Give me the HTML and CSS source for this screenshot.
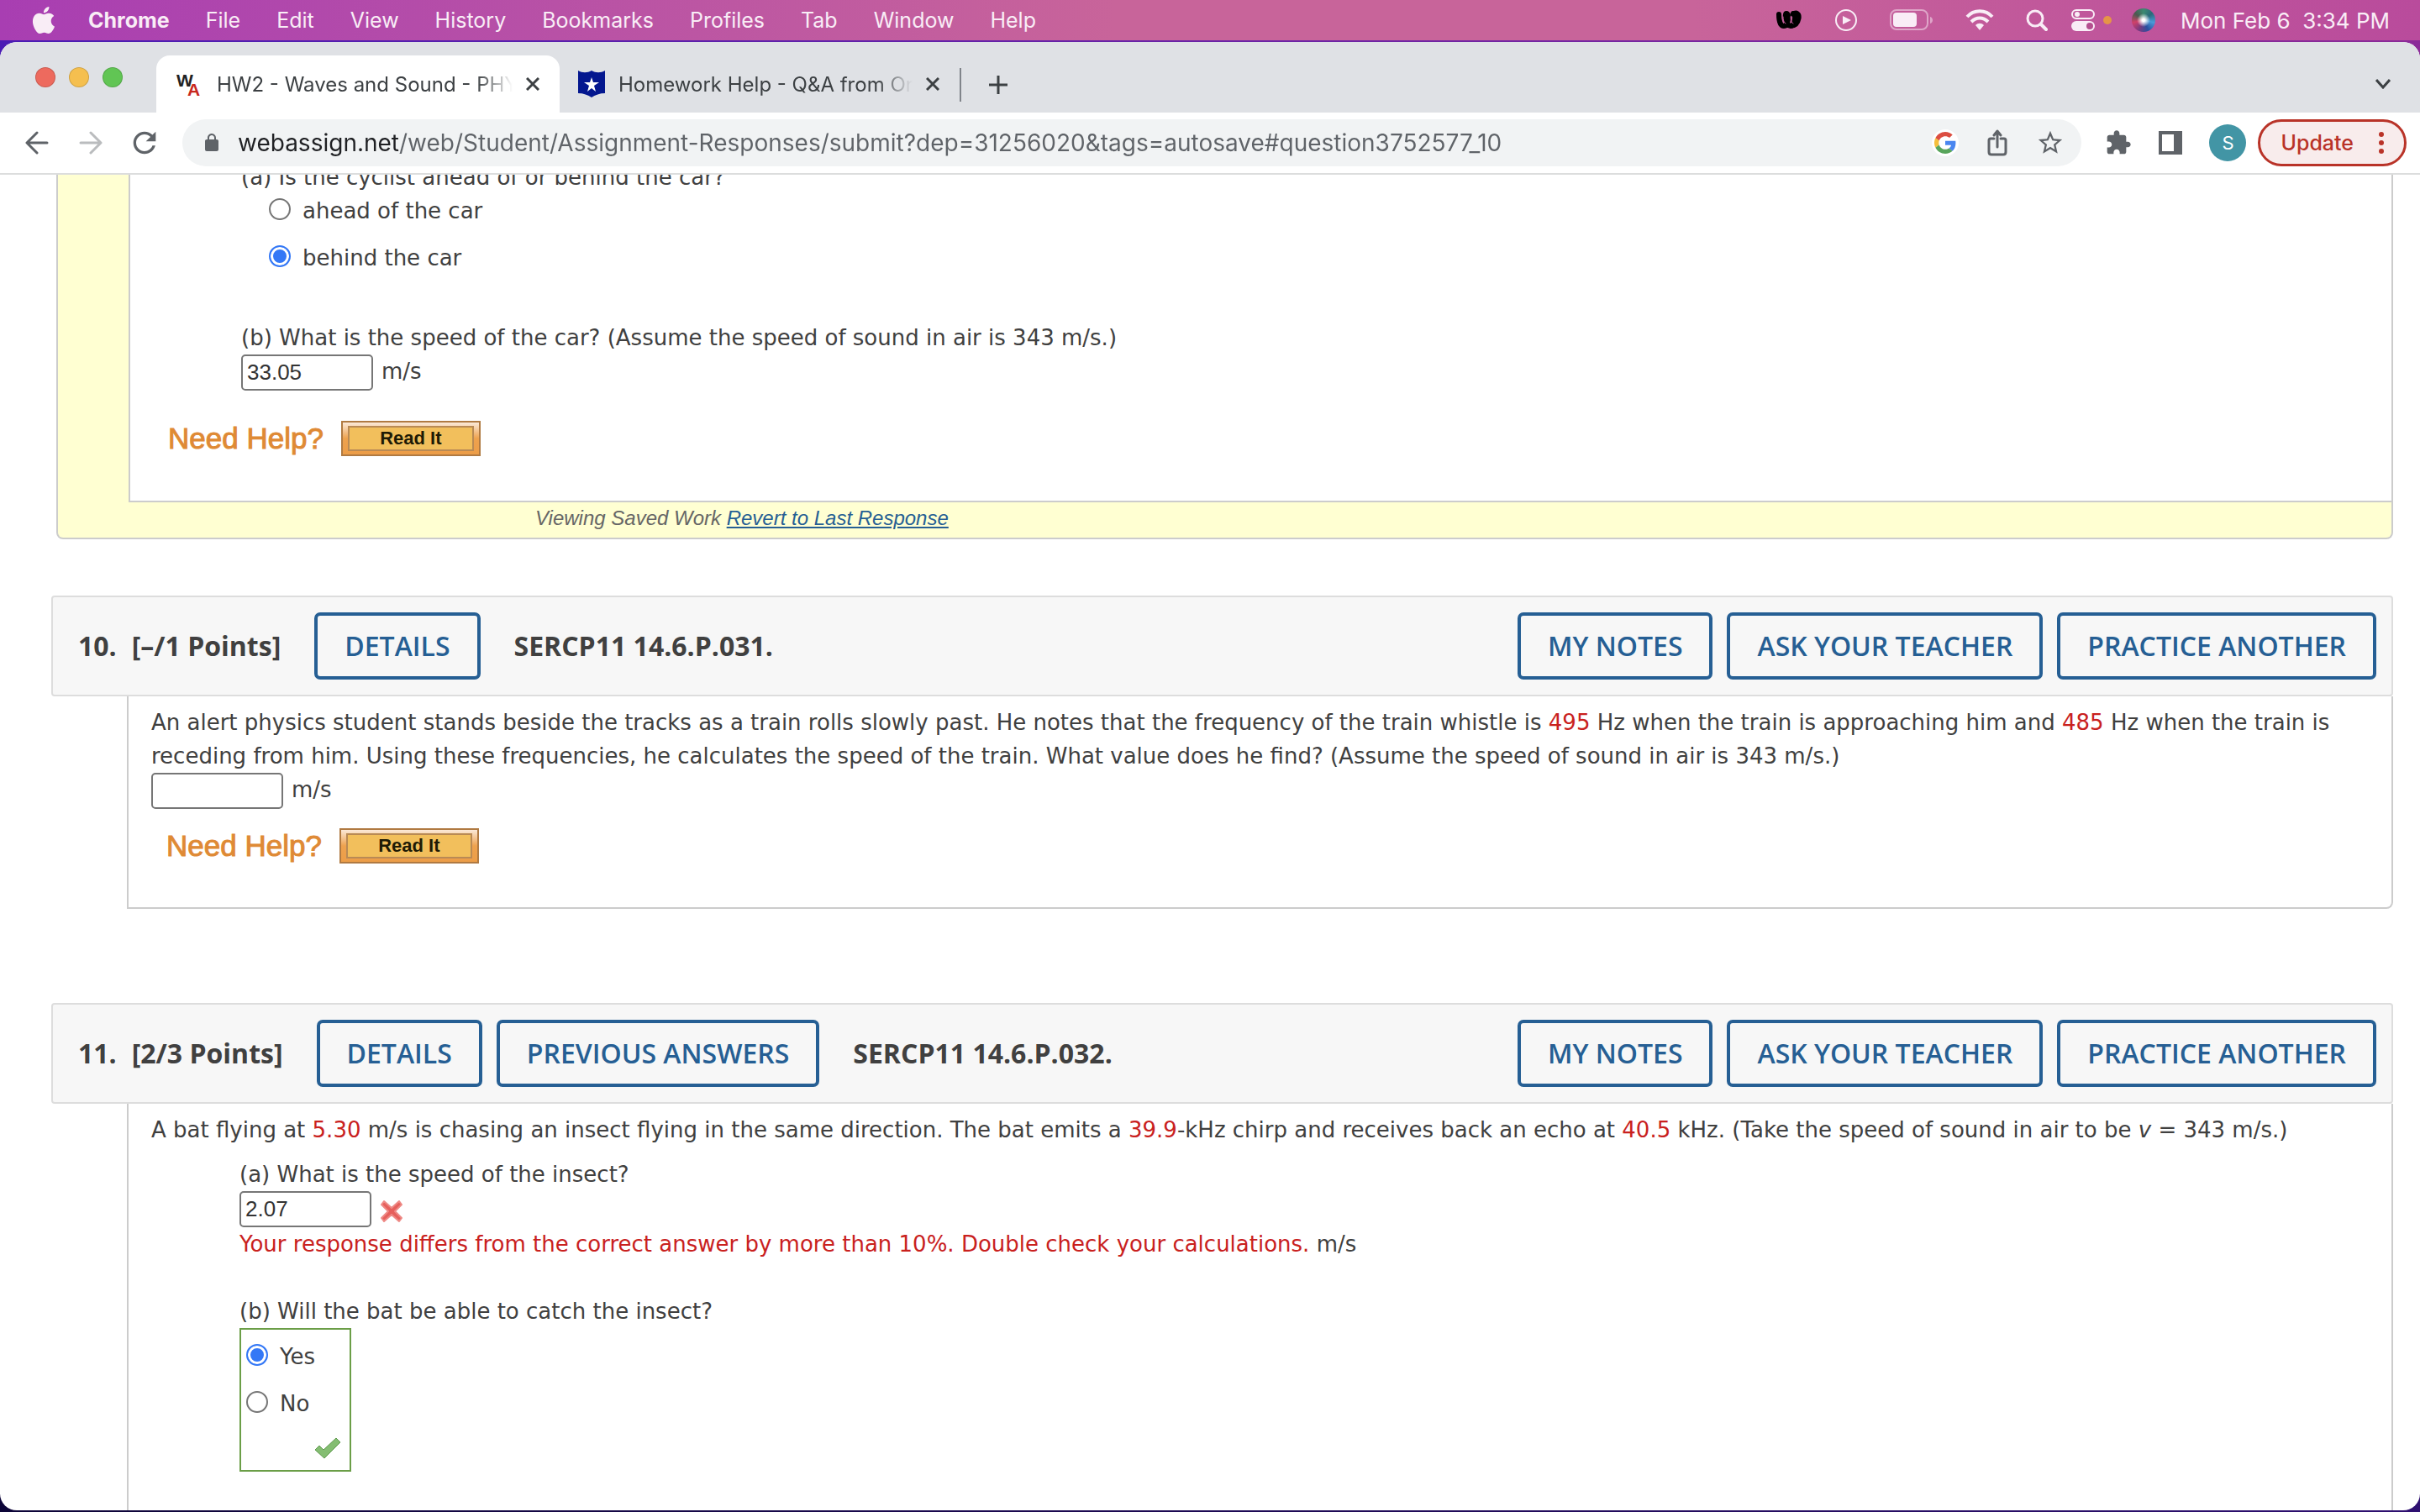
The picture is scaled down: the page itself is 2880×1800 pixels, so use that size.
FILE: index.html
```html
<!DOCTYPE html>
<html lang="en">
<head>
    <meta charset="UTF-8">
    <meta name="viewport" content="width=device-width, initial-scale=1.0">
    <title>HW2 - Waves and Sound - PHY</title>
    <link rel="stylesheet" href="styles.css">
</head>
<body>
    <header class="menubar">
        <nav class="menus">
            <button class="menu apple" aria-label="Apple menu">
                <svg class="icon-32" viewBox="0 0 24 24" fill="currentColor"><path d="M12.152 6.896c-.948 0-2.415-1.078-3.96-1.04-2.04.027-3.91 1.183-4.961 3.014-2.117 3.675-.546 9.103 1.519 12.09 1.013 1.454 2.208 3.09 3.792 3.039 1.52-.065 2.09-.987 3.935-.987 1.831 0 2.35.987 3.96.948 1.637-.026 2.676-1.48 3.676-2.948 1.156-1.688 1.636-3.325 1.662-3.415-.039-.013-3.182-1.221-3.22-4.857-.026-3.04 2.48-4.494 2.597-4.559-1.429-2.09-3.623-2.324-4.39-2.376-2-.156-3.675 1.09-4.61 1.09zM15.53 3.83c.843-1.012 1.4-2.427 1.245-3.83-1.207.052-2.662.805-3.532 1.818-.78.896-1.454 2.338-1.273 3.714 1.338.104 2.715-.688 3.559-1.701"/></svg>
            </button>
            <button class="menu app">Chrome</button>
            <button class="menu">File</button>
            <button class="menu">Edit</button>
            <button class="menu">View</button>
            <button class="menu">History</button>
            <button class="menu">Bookmarks</button>
            <button class="menu">Profiles</button>
            <button class="menu">Tab</button>
            <button class="menu">Window</button>
            <button class="menu">Help</button>
        </nav>
        <div class="status">
            <svg width="32" height="24" viewBox="0 0 32 24" fill="none" stroke="#000" stroke-linecap="round" stroke-linejoin="round"><path d="M4 5c0 8 2 14 6 14 5 0 7-15 3-15-3 0 0 15 5 15s7-14 3-15" stroke-width="6"/><path d="M20 5c5-4 9-1 8 5-1 5-4 9-9 9" stroke-width="5"/><path d="M9 8c0 4 1 7 3 8M18 8c0 4 1 7 3 8" stroke="#c05a9b" stroke-width="1"/></svg>
            <svg width="28" height="28" viewBox="0 0 28 28"><circle cx="14" cy="14" r="12" fill="none" stroke="currentColor" stroke-width="2"/><path d="M10 9l10 5-10 5z" fill="currentColor"/></svg>
            <svg width="52" height="26" viewBox="0 0 52 26"><rect x="1" y="1" width="44" height="23" rx="7" fill="none" stroke="currentColor" stroke-width="2" opacity=".5"/><rect x="4" y="4" width="28" height="17" rx="4" fill="currentColor"/><path d="M48 9c4 1 4 7 0 8z" fill="currentColor" opacity=".5"/></svg>
            <svg width="34" height="26" viewBox="0 0 34 26" fill="none" stroke="currentColor" stroke-width="4"><path d="M2 9c8-9 22-9 30 0"/><path d="M7 15c6-6 14-6 20 0"/><path d="M12 19c3-3 7-3 10 0l-5 6z" fill="currentColor" stroke="none"/></svg>
            <svg width="26" height="26" viewBox="0 0 26 26" fill="none" stroke="currentColor" stroke-linecap="round"><circle cx="11" cy="11" r="9" stroke-width="3"/><path d="M18 18l6 6" stroke-width="4"/></svg>
            <div class="status-end">
                <svg width="28" height="26" viewBox="0 0 28 26"><rect x="1" y="1" width="26" height="10" rx="5" fill="none" stroke="currentColor" stroke-width="2"/><circle cx="7" cy="6" r="3" fill="currentColor"/><rect y="14" width="28" height="12" rx="6" fill="currentColor"/><circle cx="22" cy="20" r="4" fill="#b4508f"/></svg>
                <span class="mic-dot"></span>
                <span class="siri"></span>
                <time class="clock">Mon Feb 6&nbsp; 3:34 PM</time>
            </div>
        </div>
    </header>

    <div class="window">
        <div class="tabstrip">
            <div class="lights">
                <button class="light red" aria-label="Close window"></button>
                <button class="light yellow" aria-label="Minimize window"></button>
                <button class="light green" aria-label="Zoom window"></button>
            </div>
            <div class="tab active">
                <svg class="icon-32" viewBox="0 0 32 32"><text x="0" y="19" class="logo-w">W</text><text x="13" y="30" class="logo-a">A</text></svg>
                <span class="tab-title">HW2 - Waves and Sound - PHY</span>
                <button class="close" aria-label="Close tab"><svg width="16" height="16" viewBox="0 0 16 16"><path d="M1 1l14 14M15 1L1 15"/></svg></button>
            </div>
            <div class="tab">
                <svg class="icon-32" viewBox="0 0 32 32"><path d="M0 0c5 3 11 3 16 0 5 3 11 3 16 0v27c-6 0-12 2-16 5-4-3-10-5-16-5z" fill="#04178f"/><path d="M16 8l2 6h7l-6 4 2 7-5-4-5 4 2-7-6-4h7z" fill="#fff"/></svg>
                <span class="tab-title">Homework Help - Q&amp;A from On</span>
                <button class="close" aria-label="Close tab"><svg width="16" height="16" viewBox="0 0 16 16"><path d="M1 1l14 14M15 1L1 15"/></svg></button>
            </div>
            <button class="new-tab" aria-label="New tab"><svg width="24" height="24" viewBox="0 0 24 24"><path d="M12 1v22M1 12h22"/></svg></button>
            <button class="tab-search" aria-label="Search tabs"><svg width="18" height="12" viewBox="0 0 18 12"><path d="M1 1l8 9 8-9"/></svg></button>
        </div>

        <div class="toolbar">
            <div class="nav-buttons">
                <button class="tool" aria-label="Back"><svg width="28" height="28" viewBox="0 0 28 28" class="line"><path d="M26 14H3M14 2L2 14l12 12"/></svg></button>
                <button class="tool disabled" aria-label="Forward"><svg width="28" height="28" viewBox="0 0 28 28" class="line"><path d="M2 14h23M14 2l12 12-12 12"/></svg></button>
                <button class="tool reload" aria-label="Reload"><svg width="40" height="40" viewBox="0 0 24 24" fill="currentColor"><path d="M17.65 6.35C16.2 4.9 14.21 4 12 4c-4.42 0-7.99 3.58-7.99 8s3.57 8 7.99 8c3.73 0 6.84-2.55 7.73-6h-2.08c-.82 2.33-3.04 4-5.65 4-3.31 0-6-2.69-6-6s2.69-6 6-6c1.66 0 3.14.69 4.22 1.78L13 11h7V4l-2.35 2.35z"/></svg></button>
            </div>
            <div class="omnibox">
                <svg width="24" height="24" viewBox="0 0 24 24" fill="currentColor"><path d="M18 8h-1V6c0-2.76-2.24-5-5-5S7 3.24 7 6v2H6c-1.1 0-2 .9-2 2v10c0 1.1.9 2 2 2h12c1.1 0 2-.9 2-2V10c0-1.1-.9-2-2-2zM9 6c0-1.66 1.34-3 3-3s3 1.34 3 3v2H9V6z"/></svg>
                <input class="url" type="text" aria-label="Address" value="webassign.net/web/Student/Assignment-Responses/submit?dep=31256020&amp;tags=autosave#question3752577_10">
                <button class="tool google" aria-label="Google"><svg width="26" height="26" viewBox="0 0 48 48"><path fill="#dc4e41" d="M24 9.5c3.54 0 6.71 1.22 9.21 3.6l6.85-6.85C35.9 2.38 30.47 0 24 0 14.62 0 6.51 5.38 2.56 13.22l7.98 6.19C12.43 13.72 17.74 9.5 24 9.5z"/><path fill="#4a86f0" d="M46.98 24.55c0-1.57-.15-3.09-.38-4.55H24v9.02h12.94c-.58 2.96-2.26 5.48-4.78 7.18l7.73 6c4.51-4.18 7.09-10.36 7.09-17.65z"/><path fill="#f5bf3c" d="M10.53 28.59c-.48-1.45-.76-2.99-.76-4.59s.27-3.14.76-4.59l-7.98-6.19C.92 16.46 0 20.12 0 24c0 3.88.92 7.54 2.56 10.78l7.97-6.19z"/><path fill="#58a55c" d="M24 48c6.48 0 11.93-2.13 15.89-5.81l-7.73-6c-2.15 1.45-4.92 2.3-8.16 2.3-6.26 0-11.57-4.22-13.47-9.91l-7.98 6.19C6.51 42.62 14.62 48 24 48z"/></svg></button>
                <button class="tool" aria-label="Share"><svg width="24" height="32" viewBox="0 0 24 32" class="line"><path d="M8 11H4q-2 0-2 2v14q0 3 3 3h14q3 0 3-3V13q0-2-2-2h-4M12 21V3M8 7l4-5 4 5"/></svg></button>
                <button class="tool" aria-label="Bookmark"><svg width="34" height="34" viewBox="0 0 24 24" fill="currentColor"><path d="M22 9.24l-7.19-.62L12 2 9.19 8.63 2 9.24l5.46 4.73L5.82 21 12 17.27 18.18 21l-1.63-7.03L22 9.24zM12 15.4l-3.76 2.27 1-4.28-3.32-2.88 4.38-.38L12 6.1l1.71 4.04 4.38.38-3.32 2.88 1 4.28L12 15.4z"/></svg></button>
            </div>
            <div class="tools">
                <button class="tool" aria-label="Extensions"><svg width="32" height="32" viewBox="0 0 24 24" fill="currentColor"><path d="M20.5 11H19V7c0-1.1-.9-2-2-2h-4V3.5C13 2.12 11.88 1 10.5 1S8 2.12 8 3.5V5H4c-1.1 0-1.99.9-1.99 2v3.8H3.5c1.49 0 2.7 1.21 2.7 2.7s-1.21 2.7-2.7 2.7H2V20c0 1.1.9 2 2 2h3.8v-1.5c0-1.49 1.21-2.7 2.7-2.7 1.49 0 2.7 1.21 2.7 2.7V22H17c1.1 0 2-.9 2-2v-4h1.5c1.38 0 2.5-1.12 2.5-2.5S21.88 11 20.5 11z"/></svg></button>
                <button class="tool" aria-label="Side panel"><svg width="28" height="28" viewBox="0 0 28 28"><path d="M0 0h28v28H0zM4 4v20h14V4z" fill="currentColor" fill-rule="evenodd"/></svg></button>
                <button class="tool avatar">S</button>
            </div>
            <button class="update">Update <svg width="6" height="28" viewBox="0 0 6 28" fill="currentColor"><circle cx="3" cy="4" r="3"/><circle cx="3" cy="14" r="3"/><circle cx="3" cy="24" r="3"/></svg></button>
        </div>

        <main class="page">
            <!-- question 9, already scrolled under the toolbar -->
            <section class="saved">
                <div class="saved-panel">
                    <div class="part">
                        <p>(a) Is the cyclist ahead of or behind the car?</p>
                        <div class="options indent">
                            <label class="option"><input type="radio" name="q9a"> ahead of the car</label>
                            <label class="option"><input type="radio" name="q9a" checked> behind the car</label>
                        </div>
                    </div>
                    <div class="part after-options">
                        <p><label for="q9b">(b) What is the speed of the car? (Assume the speed of sound in air is 343 m/s.)</label></p>
                        <div class="answer"><input type="text" id="q9b" value="33.05"> m/s</div>
                    </div>
                    <div class="help">
                        <span>Need Help?</span>
                        <button class="read-it">Read It</button>
                    </div>
                </div>
                <p class="saved-note">Viewing Saved Work <a href="#revert">Revert to Last Response</a></p>
            </section>

            <section class="question">
                <div class="question-head">
                    <h2><span class="number">10.</span>[–/1 Points]</h2>
                    <button class="btn">DETAILS</button>
                    <h2 class="code">SERCP11 14.6.P.031.</h2>
                    <div class="head-actions">
                        <button class="btn">MY NOTES</button>
                        <button class="btn">ASK YOUR TEACHER</button>
                        <button class="btn">PRACTICE ANOTHER</button>
                    </div>
                </div>
                <div class="question-body">
                    <p><label for="q10">An alert physics student stands beside the tracks as a train rolls slowly past. He notes that the frequency of the train whistle is <span class="value">495</span> Hz when the train is approaching him and <span class="value">485</span> Hz when the train is receding from him. Using these frequencies, he calculates the speed of the train. What value does he find? (Assume the speed of sound in air is 343 m/s.)</label></p>
                    <div class="answer"><input type="text" id="q10"> m/s</div>
                    <div class="help">
                        <span>Need Help?</span>
                        <button class="read-it">Read It</button>
                    </div>
                </div>
            </section>

            <section class="question last">
                <div class="question-head">
                    <h2><span class="number">11.</span>[2/3 Points]</h2>
                    <button class="btn">DETAILS</button>
                    <button class="btn">PREVIOUS ANSWERS</button>
                    <h2 class="code">SERCP11 14.6.P.032.</h2>
                    <div class="head-actions">
                        <button class="btn">MY NOTES</button>
                        <button class="btn">ASK YOUR TEACHER</button>
                        <button class="btn">PRACTICE ANOTHER</button>
                    </div>
                </div>
                <div class="question-body">
                    <p>A bat flying at <span class="value">5.30</span> m/s is chasing an insect flying in the same direction. The bat emits a <span class="value">39.9</span>-kHz chirp and receives back an echo at <span class="value">40.5</span> kHz. (Take the speed of sound in air to be <i>v</i> = 343 m/s.)</p>
                    <div class="part first-part">
                        <p><label for="q11a">(a) What is the speed of the insect?</label></p>
                        <div class="answer">
                            <input type="text" id="q11a" value="2.07">
                            <svg class="mark" width="28" height="28" viewBox="0 0 28 28"><path d="M5 2l9 8 9-8 3 4-8 8 8 8-3 4-9-8-9 8-3-4 8-8-8-8z" fill="#e6605c" stroke="#ee8a86" stroke-width="2" stroke-linejoin="round"/></svg>
                        </div>
                        <p><span class="value">Your response differs from the correct answer by more than 10%. Double check your calculations.</span> m/s</p>
                    </div>
                    <div class="part next-part">
                        <p>(b) Will the bat be able to catch the insect?</p>
                        <div class="options correct">
                            <label class="option"><input type="radio" name="q11b" checked> Yes</label>
                            <label class="option"><input type="radio" name="q11b"> No</label>
                            <svg class="check" width="32" height="26" viewBox="0 0 32 26"><path d="M1 15l5-5 5 5L26 1l5 5-19 19z" fill="#84bd72" stroke="#5f9a4e" stroke-linejoin="round"/></svg>
                        </div>
                    </div>
                </div>
            </section>
        </main>
    </div>
</body>
</html>
```

FILE: styles.css
```css
* {
    box-sizing: border-box;
    margin: 0;
    padding: 0;
}

body {
    display: flex;
    flex-direction: column;
    height: 100vh;
    overflow: hidden;
    padding-bottom: 2px;
    background: linear-gradient(90deg, #4a1cb4, #8b2a98) top / 100% 50% no-repeat,
        linear-gradient(90deg, #0d0538, #2e1070);
    font-family: Inter, "Liberation Sans", sans-serif;
}

button {
    border: none;
    background: none;
    color: inherit;
    font: inherit;
}

svg {
    display: block;
    flex: none;
}

.icon-32 {
    width: 32px;
    height: 32px;
    overflow: visible;
}

/* menu bar */
.menubar {
    display: flex;
    justify-content: space-between;
    align-items: center;
    flex: none;
    height: 48px;
    margin-bottom: 2px;
    padding: 0 36px;
    background: linear-gradient(90deg, #a83eb2, #c8649a 46%, #c8649a 70%, #b94b9c);
    color: #f9edf6;
    font-size: 25px;
}

.menus {
    display: flex;
    align-items: center;
    gap: 43px;
}

.apple {
    margin-right: -6px;
}

.app {
    font-weight: 700;
}

.status {
    display: flex;
    align-items: center;
    gap: 38px;
}

.status-end {
    display: flex;
    align-items: center;
    gap: 10px;
    margin-left: -10px;
}

.mic-dot {
    width: 10px;
    height: 10px;
    border-radius: 50%;
    background: #e59547;
}

.siri {
    width: 28px;
    height: 28px;
    margin: 0 20px 0 14px;
    border-radius: 50%;
    background: radial-gradient(circle at 50% 50%, #fff 8%, transparent 40%),
        conic-gradient(#3c8a72, #2a6a7a, #4a9ad8, #2a50a0, #7a3a80, #d0406a, #4a5a50, #3c8a72);
}

.clock {
    font-size: 26px;
}

/* browser window */
.window {
    display: flex;
    flex-direction: column;
    flex: 1;
    min-height: 0;
    overflow: hidden;
    border-radius: 20px;
    background: #fff;
}

.tabstrip {
    display: flex;
    align-items: flex-end;
    flex: none;
    height: 84px;
    background: #dfe1e5;
    color: #3c4043;
    stroke: #3c4043;
    stroke-width: 3;
}

.tabstrip path {
    fill: none;
}

.tabstrip .icon-32 path {
    fill: revert-layer;
    stroke: none;
}

.lights {
    display: flex;
    align-self: center;
    gap: 16px;
    width: 186px;
    padding-left: 42px;
}

.light {
    width: 24px;
    height: 24px;
    border: 1px solid rgba(0, 0, 0, .15);
    border-radius: 50%;
}

.red {
    background: #ed6a5e;
}

.yellow {
    background: #f5bf4f;
}

.green {
    background: #61c554;
}

.tab {
    display: flex;
    align-items: center;
    gap: 16px;
    width: 480px;
    height: 68px;
    padding: 0 24px;
    font-size: 24px;
}

.tab.active {
    border-radius: 16px 16px 0 0;
    background: #fff;
}

.tab + .tab {
    width: 476px;
    padding-left: 22px;
}

.logo-w,
.logo-a {
    fill: #222;
    stroke: none;
    font-family: "Liberation Sans", sans-serif;
    font-size: 21px;
    font-weight: 700;
}

.logo-a {
    fill: #c8281e;
}

.tab-title {
    flex: 1;
    overflow: hidden;
    white-space: nowrap;
    -webkit-mask-image: linear-gradient(90deg, #000 88%, transparent);
    mask-image: linear-gradient(90deg, #000 88%, transparent);
}

.new-tab {
    align-self: center;
    height: 40px;
    margin-top: 17px;
    padding-left: 32px;
    border-left: 2px solid #80848a;
}

.tab-search {
    height: 68px;
    margin-left: auto;
    padding: 0 35px;
}

.toolbar {
    display: flex;
    align-items: center;
    flex: none;
    height: 74px;
    padding: 0 16px 0 24px;
    border-bottom: 2px solid #dcdddd;
    color: #5f6368;
}

.nav-buttons {
    display: flex;
    align-items: center;
    width: 193px;
    padding-left: 6px;
    gap: 36px;
}

.reload {
    margin-left: -6px;
}

.line {
    fill: none;
    stroke: currentColor;
    stroke-width: 3;
    stroke-linecap: round;
    stroke-linejoin: round;
}

.disabled {
    color: #babcbe;
}

.omnibox {
    display: flex;
    align-items: center;
    flex: 1;
    gap: 34px;
    height: 56px;
    padding: 0 20px 0 23px;
    border-radius: 28px;
    background: #f1f3f4;
}

/* host part of the address is darker than the rest */
.url {
    flex: 1;
    min-width: 0;
    height: 40px;
    margin-left: -15px;
    border: none;
    background: linear-gradient(90deg, #202124 193px, #5f6368 193px);
    -webkit-background-clip: text;
    background-clip: text;
    color: transparent;
    font: 28px Inter, sans-serif;
}

.google {
    padding: 3px;
    border-radius: 50%;
    background: #fff;
}

.tools {
    display: flex;
    align-items: center;
    gap: 32px;
    padding: 0 14px 0 28px;
}

.avatar {
    width: 44px;
    height: 44px;
    border-radius: 50%;
    background: #4295a5;
    color: #fff;
    font-size: 22px;
}

.update {
    display: flex;
    align-items: center;
    gap: 30px;
    height: 56px;
    padding: 0 24px;
    border: 3px solid #b93328;
    border-radius: 28px;
    background: #f8ecec;
    color: #b93328;
    font-size: 25px;
    font-weight: 500;
}

/* assignment page */
.page {
    display: flex;
    flex-direction: column;
    flex: 1;
    min-height: 0;
    overflow: hidden;
    padding: 0 32px 0 61px;
    color: #404040;
    font: 26px/40px Verdana, "DejaVu Sans", sans-serif;
}

.saved {
    flex: none;
    margin: -17px 0 67px 6px;
    padding-left: 84px;
    border: 2px solid #ccc;
    border-top: none;
    border-radius: 0 0 8px 8px;
    background: #ffffd2;
}

.saved-panel {
    padding: 0 0 53px 45px;
    border-left: 2px solid #ccc;
    border-bottom: 2px solid #ccc;
    background: #fff;
}

.saved-note {
    padding: 0 0 4px 484px;
    color: #666;
    font: italic 24px/38px "Liberation Sans", Arial, sans-serif;
}

.saved-note a {
    color: #265f94;
}

.part {
    padding-left: 105px;
}

.saved .part {
    padding-left: 87px;
}

.first-part {
    margin-top: 13px;
}

.next-part {
    margin-top: 40px;
}

.after-options {
    margin-top: 55px;
}

.options {
    display: flex;
    flex-direction: column;
    align-items: flex-start;
    gap: 16px;
}

.indent {
    padding-left: 33px;
}

.option {
    display: flex;
    align-items: center;
    gap: 14px;
}

.option input {
    width: 26px;
    height: 26px;
    margin-bottom: 4px;
    appearance: none;
    border: 2px solid #767676;
    border-radius: 50%;
    background: #fff;
}

.option input:checked {
    border-color: #3478f6;
    background: #3478f6;
    box-shadow: inset 0 0 0 3px #fff;
}

.answer {
    display: flex;
    gap: 10px;
    height: 43px;
}

.answer input {
    width: 157px;
    height: 43px;
    padding: 0 5px;
    border: 2px solid #767676;
    border-radius: 5px;
    color: #333;
    font: 26px "Liberation Sans", Arial, sans-serif;
}

.mark {
    margin-top: 10px;
}

.correct {
    position: relative;
    width: 133px;
    height: 171px;
    padding: 12px 6px;
    border: 2px solid #6b9e47;
}

.check {
    position: absolute;
    right: 10px;
    bottom: 13px;
}

.help {
    display: flex;
    align-items: center;
    gap: 21px;
    margin-top: 23px;
    padding-left: 18px;
    color: #df8a35;
    font: 35px/42px "Liberation Sans", Arial, sans-serif;
    -webkit-text-stroke: 1px #df8a35;
}

.saved .help {
    margin-top: 36px;
    padding-left: 0;
}

/* bevelled frame: centre, inner line, outer gradient */
.read-it {
    width: 166px;
    height: 42px;
    border: 2px solid #b07a42;
    background: linear-gradient(#f2bf5c, #f2bf5c) center / calc(100% - 16px) calc(100% - 12px) no-repeat,
        linear-gradient(#b98a55, #b98a55) center / calc(100% - 12px) calc(100% - 8px) no-repeat,
        linear-gradient(#fbe9d8, #eea24e 50%, #ec9d48);
    color: #1e1a05;
    font: bold 22px "Liberation Sans", Arial, sans-serif;
    -webkit-text-stroke: 0;
}

.question {
    flex: none;
    margin-bottom: 112px;
}

.question.last {
    display: flex;
    flex-direction: column;
    flex: 1;
    margin-bottom: 0;
}

.question-head {
    display: flex;
    align-items: center;
    gap: 17px;
    height: 120px;
    padding: 0 18px 0 30px;
    border: 2px solid #ddd;
    border-radius: 4px;
    background: #f7f7f7;
    font-family: "Open Sans", sans-serif;
}

.question-head h2 {
    margin-right: 23px;
    font-size: 32px;
    font-weight: 700;
    white-space: nowrap;
}

.question-head .number {
    margin-right: 18px;
}

.question-head .code {
    margin-left: 23px;
}

.head-actions {
    display: flex;
    gap: 17px;
    margin-left: auto;
}

.btn {
    height: 80px;
    padding: 0 32px;
    border: 4px solid #265f94;
    border-radius: 7px;
    color: #265f94;
    font-size: 32px;
    font-weight: 600;
    white-space: nowrap;
}

.question-body {
    margin-left: 90px;
    padding: 11px 40px 52px 27px;
    border: 2px solid #ccc;
    border-top: none;
    border-radius: 0 0 8px 0;
}

.last .question-body {
    flex: 1;
    border-bottom: none;
    border-radius: 0;
}

.value {
    color: #c9211e;
}
```
